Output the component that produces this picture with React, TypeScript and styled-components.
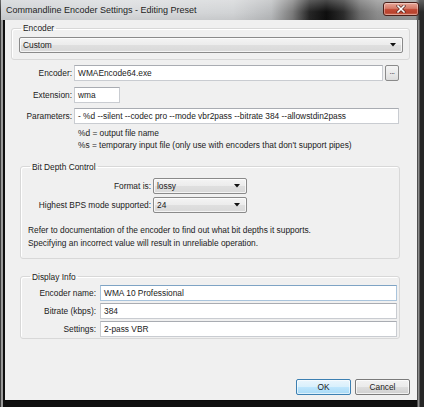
import React from 'react';
import styled, { createGlobalStyle } from 'styled-components';

const GlobalStyle = createGlobalStyle`
  html, body {
    margin: 0;
    padding: 0;
    background: #1a1a1a;
  }
  body {
    font-family: "Liberation Sans", Arial, sans-serif;
    color: #1b1b1b;
  }
`;

const Window = styled.div`
    width: 424px;
    height: 407px;
    display: flex;
    flex-direction: column;
    box-sizing: border-box;
    background: #1c1c1c;
`;

const TitleBar = styled.div`
    height: 20px;
    flex: none;
    display: flex;
    align-items: flex-start;
    padding: 0 5px 0 6px;
    box-sizing: border-box;
    background:
      linear-gradient(180deg, rgba(255,255,255,0.25) 0, rgba(255,255,255,0) 60%, rgba(0,0,0,0.06) 100%),
      linear-gradient(90deg, #3a3a3a 0, #3a3a3a 1px, #cfd2d5 1px, #d9dbdd 30%, #d2d4d6 55%, #b9bbbd 64%, #7c7c7c 69%, #262626 73%, #0e0e0e 77%, #2c2c2c 81%, #6f6f6f 85%, #8e8e8e 89%, #9a9a9a 98%, #2a2a2a 99%);
`;

const Title = styled.div`
    flex: 1;
    font-size: 9px;
    line-height: 20px;
    color: #1e1e1e;
    white-space: nowrap;
`;

const CloseButton = styled.div`
    width: 36px;
    height: 14px;
    margin-top: 2px;
    display: flex;
    align-items: center;
    justify-content: center;
    box-sizing: border-box;
    border: 1px solid #4a1f18;
    border-radius: 3px;
    background: linear-gradient(180deg, #e9a899 0%, #d47a68 45%, #c24a35 55%, #b8432f 80%, #d2705a 100%);
    box-shadow: inset 0 0 0 1px rgba(255, 255, 255, 0.35);
`;

const FrameBody = styled.div`
    flex: 1;
    display: flex;
    padding: 0 7px 7px 5px;
    background: linear-gradient(90deg, #3b3b3b 0, #3b3b3b 1px, #9a9a9a 1px, #9a9a9a 3px, #0f0f0f 3px, #0f0f0f 417px, #8d8d8d 418px, #8d8d8d 419px, #262626 420px);
`;

const Client = styled.div`
    flex: 1;
    display: flex;
    flex-direction: column;
    background: #f0f0f0;
    padding: 3px 7px 0 6px;
    box-shadow: 0 1px 0 0 #0a0a0a;
`;

const GroupBox = styled.fieldset<{ $inset?: boolean }>`
    margin: ${p => (p.$inset ? '0 10px 0 9px' : '0')};
    padding: 0 6px 6px 7px;
    border: 1px solid #d8d8d8;
    border-radius: 3px;
    box-shadow: inset 1px 1px 0 #ffffff;
    min-width: 0;

    legend {
        font-size: 8.35px;
        line-height: 10px;
        padding: 0 2px;
        margin-left: 2px;
        color: #1b1b1b;
    }
`;

const Combo = styled.div<{ $width?: number }>`
    height: 16px;
    width: ${p => (p.$width ? `${p.$width}px` : 'auto')};
    box-sizing: border-box;
    display: flex;
    align-items: center;
    padding: 0 6px 0 3px;
    border: 1px solid #8a8a8a;
    border-radius: 2px;
    background: linear-gradient(180deg, #f4f4f4 0%, #ececec 48%, #dfdfdf 52%, #d9d9d9 100%);
    box-shadow: inset 0 0 0 1px rgba(255, 255, 255, 0.7);
    font-size: 8.35px;

    span {
        flex: 1;
    }
`;

const Arrow = () => (
  <svg width="6" height="4" viewBox="0 0 6 4">
    <polygon points="0,0 6,0 3,3.5" fill="#111" />
  </svg>
);

const FieldGrid = styled.div<{ $label: number; $gap: number; $rowGap: number }>`
    display: grid;
    grid-template-columns: ${p => p.$label}px 1fr;
    column-gap: ${p => p.$gap}px;
    row-gap: ${p => p.$rowGap}px;
    align-items: center;
`;

const Label = styled.label`
    font-size: 8.35px;
    text-align: right;
    white-space: nowrap;
`;

const Input = styled.div<{ $width?: number }>`
    height: 16px;
    width: ${p => (p.$width ? `${p.$width}px` : 'auto')};
    box-sizing: border-box;
    display: flex;
    align-items: center;
    padding: 0 3px;
    background: #ffffff;
    border: 1px solid #c9ccd1;
    border-top-color: #a9acb2;
    font-size: 8.35px;
    white-space: nowrap;
    overflow: hidden;
`;

const InputRow = styled.div`
    display: flex;
    align-items: center;
    gap: 2px;
`;

const BrowseButton = styled.div`
    width: 14px;
    height: 16px;
    flex: none;
    box-sizing: border-box;
    border: 1px solid #8a8a8a;
    border-radius: 2px;
    background: linear-gradient(180deg, #f4f4f4 0%, #eaeaea 50%, #dcdcdc 100%);
    font-size: 8px;
    line-height: 11px;
    text-align: center;
    color: #223;
    letter-spacing: -0.5px;
`;

const EncoderFields = styled(FieldGrid)`
    margin-top: 5px;
    padding-right: 11px;
`;

const Hint = styled.div`
    grid-column: 2;
    padding-left: 4px;
    margin-top: -3px;
    font-size: 8.35px;
    line-height: 12px;
`;

const BitDepthGroup = styled(GroupBox)`
    margin-top: 11px;
    padding-top: 6px;
    padding-bottom: 8px;
`;

const Note = styled.p`
    margin: 11px 0 0;
    font-size: 8.35px;
    line-height: 13px;
`;

const DisplayGroup = styled(GroupBox)`
    margin-top: 13px;
    padding: 3px 2px 1px 7px;
`;

const ButtonBar = styled.div`
    margin-top: auto;
    margin-bottom: 5px;
    display: flex;
    justify-content: flex-end;
    gap: 4px;
`;

const DialogButton = styled.div<{ $default?: boolean }>`
    width: 55px;
    height: 16px;
    box-sizing: border-box;
    border: 1px solid ${p => (p.$default ? '#3c7fb1' : '#7a7a7a')};
    border-radius: 2px;
    background: ${p =>
      p.$default
        ? 'linear-gradient(180deg, #eaf6fd 0%, #d9f0fc 48%, #bee6fd 52%, #a7d9f5 100%)'
        : 'linear-gradient(180deg, #f2f2f2 0%, #ebebeb 48%, #dddddd 52%, #cfcfcf 100%)'};
    box-shadow: inset 0 0 0 1px ${p => (p.$default ? 'rgba(255,255,255,0.6)' : 'rgba(255,255,255,0.7)')};
    font-size: 8.35px;
    line-height: 14px;
    text-align: center;
`;

const App: React.FC = () => {
  return (
    <>
      <GlobalStyle />
      <Window>
        <TitleBar>
          <Title>Commandline Encoder Settings - Editing Preset</Title>
          <CloseButton>
            <svg width="10" height="8" viewBox="0 0 10 8">
              <path d="M2 1 L8 7 M8 1 L2 7" stroke="#5a2a22" strokeWidth="3" strokeLinecap="square" />
              <path d="M2 1 L8 7 M8 1 L2 7" stroke="#ffffff" strokeWidth="1.6" strokeLinecap="square" />
            </svg>
          </CloseButton>
        </TitleBar>
        <FrameBody>
          <Client>
            <GroupBox>
              <legend>Encoder</legend>
              <Combo style={{ marginTop: 4 }}>
                <span>Custom</span>
                <Arrow />
              </Combo>
            </GroupBox>

            <EncoderFields $label={61} $gap={2} $rowGap={5.5}>
              <Label>Encoder:</Label>
              <InputRow>
                <Input style={{ flex: 1 }}>WMAEncode64.exe</Input>
                <BrowseButton>...</BrowseButton>
              </InputRow>
              <Label>Extension:</Label>
              <Input $width={46}>wma</Input>
              <Label>Parameters:</Label>
              <Input>- %d --silent --codec pro --mode vbr2pass --bitrate 384 --allowstdin2pass</Input>
              <Hint>
                %d = output file name<br />
                %s = temporary input file (only use with encoders that don't support pipes)
              </Hint>
            </EncoderFields>

            <BitDepthGroup $inset>
              <legend>Bit Depth Control</legend>
              <FieldGrid $label={123} $gap={2} $rowGap={3}>
                <Label>Format is:</Label>
                <Combo $width={94}>
                  <span>lossy</span>
                  <Arrow />
                </Combo>
                <Label>Highest BPS mode supported:</Label>
                <Combo $width={94}>
                  <span>24</span>
                  <Arrow />
                </Combo>
              </FieldGrid>
              <Note>
                Refer to documentation of the encoder to find out what bit depths it supports.<br />
                Specifying an incorrect value will result in unreliable operation.
              </Note>
            </BitDepthGroup>

            <DisplayGroup $inset>
              <legend>Display Info</legend>
              <FieldGrid $label={68} $gap={4} $rowGap={2}>
                <Label>Encoder name:</Label>
                <Input style={{ borderColor: '#a9c4dc', borderTopColor: '#7ea3c4' }}>WMA 10 Professional</Input>
                <Label>Bitrate (kbps):</Label>
                <Input>384</Input>
                <Label>Settings:</Label>
                <Input>2-pass VBR</Input>
              </FieldGrid>
            </DisplayGroup>

            <ButtonBar>
              <DialogButton $default>OK</DialogButton>
              <DialogButton>Cancel</DialogButton>
            </ButtonBar>
          </Client>
        </FrameBody>
      </Window>
    </>
  );
};

export default App;
